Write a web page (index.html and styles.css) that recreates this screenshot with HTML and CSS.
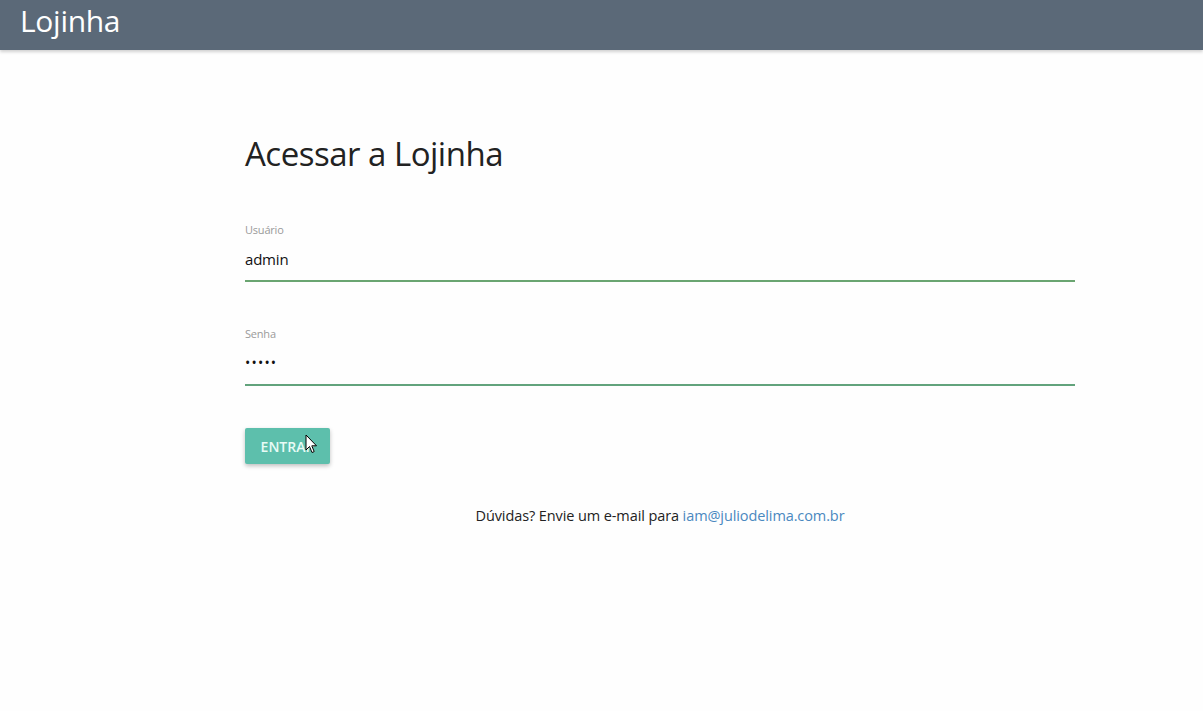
FILE: index.html
```html
<!DOCTYPE html>
<html lang="pt-BR">
<head>
<meta charset="utf-8">
<title>Lojinha</title>
<link rel="stylesheet" href="styles.css">
</head>
<body>
<header class="navbar">
  <span class="brand">Lojinha</span>
</header>
<main class="container">
  <h1 class="title">Acessar a Lojinha</h1>
  <form class="login-form">
    <div class="field">
      <label class="field-label" for="usuario">Usuário</label>
      <input class="field-input" id="usuario" type="text" value="admin">
    </div>
    <div class="field">
      <label class="field-label" for="senha">Senha</label>
      <input class="field-input password" id="senha" type="password" value="admin">
    </div>
    <div class="actions">
      <button type="button" class="btn">ENTRAR</button>
      <svg class="cursor" width="13" height="20" viewBox="0 0 13 20">
        <path d="M1 1 L1 16 L4.5 12.5 L7 18.5 L9.2 17.6 L6.8 11.8 L11.5 11.8 Z" fill="#fff" stroke="#000" stroke-width="1" stroke-linejoin="round"/>
      </svg>
    </div>
  </form>
  <p class="help">Dúvidas? Envie um e-mail para <a class="help-link" href="#">iam@juliodelima.com.br</a></p>
</main>
</body>
</html>
```

FILE: styles.css
```css
* { box-sizing: border-box; }
html, body { margin: 0; padding: 0; }
body {
  background: #fefefe;
  font-family: "Open Sans", "Noto Sans", sans-serif;
  color: #222;
  width: 1203px;
  height: 711px;
  overflow: hidden;
}
.navbar {
  height: 50px;
  background: #5b6978;
  box-shadow: 0 2px 3px rgba(0,0,0,0.18);
  display: flex;
  align-items: center;
  padding-left: 20px;
}
.brand {
  color: #fff;
  font-size: 30px;
  letter-spacing: -0.3px;
  line-height: 1;
  margin-top: -9px;
}
.container {
  margin-left: 245px;
  width: 830px;
  padding-top: 84px;
}
.title {
  margin: 0;
  font-weight: 400;
  font-size: 33px;
  line-height: 40px;
  color: #222;
  letter-spacing: -0.5px;
}
.login-form {
  margin-top: 49px;
  display: flex;
  flex-direction: column;
}
.field {
  display: flex;
  flex-direction: column;
}
.field + .field {
  margin-top: 45px;
}
.field-label {
  font-size: 11px;
  color: #9a9a9a;
  line-height: 14px;
  letter-spacing: -0.2px;
}
.field-input {
  border: none;
  border-bottom: 2px solid #6aa571;
  background: transparent;
  font-family: inherit;
  font-size: 15px;
  color: #111;
  padding: 0;
  height: 45px;
  margin: 0;
  outline: none;
  letter-spacing: -0.2px;
}
.field-input.password {
  border-bottom-color: #62a37c;
  font-size: 14px;
  letter-spacing: 1.2px;
}
.actions {
  position: relative;
  margin-top: 42px;
}
.btn {
  width: 85px;
  height: 36px;
  border: none;
  border-radius: 2px;
  background: #5dbfac;
  color: #e8fbf6;
  font-family: inherit;
  font-weight: 600;
  font-size: 14px;
  letter-spacing: 0;
  box-shadow: 0 2px 4px rgba(0,0,0,0.25);
  padding: 0;
  display: block;
}
.cursor {
  position: absolute;
  left: 60px;
  top: 6px;
}
.help {
  margin: 42px 0 0 0;
  text-align: center;
  font-size: 14.5px;
  line-height: 20px;
  color: #222;
  letter-spacing: -0.1px;
}
.help-link {
  color: #4a88c0;
  text-decoration: none;
}
```
